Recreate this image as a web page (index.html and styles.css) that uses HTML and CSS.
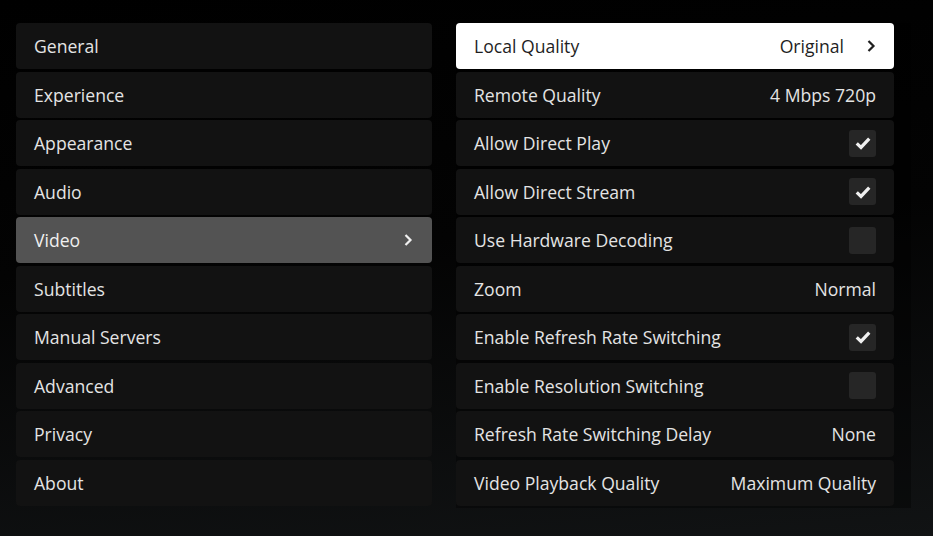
FILE: index.html
```html
<!DOCTYPE html>
<html lang="en">
  <head>
    <meta charset="UTF-8" />
    <title>Settings - Video</title>
    <link rel="stylesheet" href="styles.css">
  </head>
  <body>
    <div class="settings">
      <!-- Categories -->
      <div class="menu">
        <div class="row">General</div>
        <div class="row">Experience</div>
        <div class="row">Appearance</div>
        <div class="row">Audio</div>
        <div class="row selected">
          <span>Video</span>
          <svg class="chevron" viewBox="0 0 10 14"><path d="M2.5 2 L7.5 7 L2.5 12" /></svg>
        </div>
        <div class="row">Subtitles</div>
        <div class="row">Manual Servers</div>
        <div class="row">Advanced</div>
        <div class="row">Privacy</div>
        <div class="row">About</div>
      </div>

      <!-- Video options -->
      <div class="options-wrap">
        <div class="options">
          <div class="row focused">
            <span>Local Quality</span>
            <span class="value">Original
              <svg class="chevron" viewBox="0 0 10 14"><path d="M2.5 2 L7.5 7 L2.5 12" /></svg>
            </span>
          </div>
          <div class="row"><span>Remote Quality</span><span class="value">4 Mbps 720p</span></div>
          <div class="row">
            <span>Allow Direct Play</span>
            <span class="check"><svg viewBox="0 0 16 16"><path d="M3 8.3 L6.4 11.5 L13 4.5" /></svg></span>
          </div>
          <div class="row">
            <span>Allow Direct Stream</span>
            <span class="check"><svg viewBox="0 0 16 16"><path d="M3 8.3 L6.4 11.5 L13 4.5" /></svg></span>
          </div>
          <div class="row"><span>Use Hardware Decoding</span><span class="check"></span></div>
          <div class="row"><span>Zoom</span><span class="value">Normal</span></div>
          <div class="row">
            <span>Enable Refresh Rate Switching</span>
            <span class="check"><svg viewBox="0 0 16 16"><path d="M3 8.3 L6.4 11.5 L13 4.5" /></svg></span>
          </div>
          <div class="row"><span>Enable Resolution Switching</span><span class="check"></span></div>
          <div class="row"><span>Refresh Rate Switching Delay</span><span class="value">None</span></div>
          <div class="row"><span>Video Playback Quality</span><span class="value">Maximum Quality</span></div>
        </div>
      </div>
    </div>
  </body>
</html>
```

FILE: styles.css
```css
html, body {
  height: 100%;
}

body {
  margin: 0;
  font-family: "Open Sans", "Noto Sans", Arial, sans-serif;
  background: linear-gradient(175deg, #000 0%, #030303 45%, #111314 100%);
  color: #e4e4e4;
  overflow: hidden;
}

.settings {
  display: flex;
  align-items: flex-start;
  gap: 24px;
  padding: 23px 0 0 16px;
}

.menu,
.options {
  display: flex;
  flex-direction: column;
  gap: 2.5px;
}

.menu {
  width: 416px;
}

.options-wrap {
  padding-right: 17px;
  padding-bottom: 2px;
  background-color: rgba(0, 0, 0, 0.35);
}

.options {
  width: 438px;
}

.row {
  height: 46px;
  display: flex;
  justify-content: space-between;
  align-items: center;
  padding: 0 18px;
  background-color: #121212;
  border-radius: 4px;
  font-size: 17.6px;
  box-sizing: border-box;
}

.row.selected {
  background-color: #535353;
  color: #f0f0f0;
}

.row.focused {
  background-color: #fff;
  color: #1f1f1f;
}

.value {
  display: flex;
  align-items: center;
}

.chevron {
  width: 10px;
  height: 14px;
  fill: none;
  stroke: currentColor;
  stroke-width: 2.2;
}

.selected .chevron {
  margin-right: 1px;
}

.focused .chevron {
  margin-left: 22px;
}

.check {
  width: 27px;
  height: 27px;
  background-color: #262626;
  border-radius: 3px;
  display: flex;
  justify-content: center;
  align-items: center;
}

.check svg {
  width: 20px;
  height: 20px;
  fill: none;
  stroke: #f0f0f0;
  stroke-width: 2.6;
}
```
